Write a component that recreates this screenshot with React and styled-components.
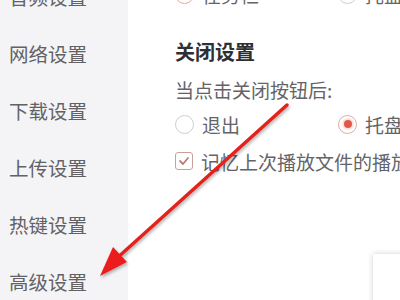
import styled, { createGlobalStyle } from 'styled-components'

const Global = createGlobalStyle`
  html, body {
    margin: 0;
    padding: 0;
    background: #fff;
  }
  body {
    font-family: "Noto Sans CJK SC", "Noto Sans", sans-serif;
  }
`;

const Page = styled.div`
  position: relative;
  width: 400px;
  height: 300px;
  overflow: hidden;
  display: flex;
`;

const Sidebar = styled.div`
  width: 128px;
  flex-shrink: 0;
  background: #f4f4f6;
  display: flex;
  flex-direction: column;
`;

const NavList = styled.div`
  margin-top: -32px;
  display: flex;
  flex-direction: column;
`;

const NavItem = styled.div`
  height: 57px;
  line-height: 57px;
  padding-left: 9px;
  font-size: 19.5px;
  color: #626266;
  white-space: nowrap;
`;

const Main = styled.div`
  flex: 1;
  padding-left: 47px;
  background: #fff;
`;

const Content = styled.div`
  margin-top: -18px;
  display: flex;
  flex-direction: column;
`;

const Row = styled.div`
  display: flex;
  align-items: center;
  height: 24px;
  margin-top: ${p => p.$gap || 0}px;
  white-space: nowrap;
`;

const Option = styled.div`
  display: flex;
  align-items: center;
  width: ${p => p.$width || 'auto'};
  flex-shrink: 0;
`;

const Radio = styled.span`
  box-sizing: border-box;
  width: 19px;
  height: 19px;
  border-radius: 50%;
  border: 1px solid ${p => (p.$on ? '#eaa99d' : '#cfcfcf')};
  display: flex;
  align-items: center;
  justify-content: center;
  flex-shrink: 0;
  &::after {
    content: '';
    display: ${p => (p.$on ? 'block' : 'none')};
    width: 8px;
    height: 8px;
    border-radius: 50%;
    background: #e0594b;
    box-shadow: 0 0 0 2px #fbe3de;
  }
`;

const Check = styled.span`
  box-sizing: border-box;
  width: 18px;
  height: 18px;
  border-radius: 3px;
  border: 1.5px solid #c9a198;
  display: flex;
  align-items: center;
  justify-content: center;
  flex-shrink: 0;
`;

const Label = styled.span`
  margin-left: 8px;
  font-size: 19px;
  color: #646468;
`;

const Heading = styled.div`
  margin-top: 33px;
  line-height: 26px;
  font-size: 20px;
  font-weight: 700;
  color: #2f2f31;
`;

const SubText = styled.div`
  margin-top: 13px;
  line-height: 24px;
  font-size: 19px;
  color: #646468;
  white-space: nowrap;
`;

const Popup = styled.div`
  position: absolute;
  left: 373px;
  top: 254px;
  width: 60px;
  height: 80px;
  background: #fff;
  box-shadow: 0 0 6px rgba(0, 0, 0, 0.18);
`;

const Overlay = styled.svg`
  position: absolute;
  left: 0;
  top: 0;
  pointer-events: none;
`;

function CheckMark() {
  return (
    <svg width="12" height="10" viewBox="0 0 12 10">
      <path d="M2 5 L5 8 L10 2" fill="none" stroke="#b87d73" strokeWidth="1.8" strokeLinecap="round" strokeLinejoin="round" />
    </svg>
  );
}

const navItems = ['音频设置', '网络设置', '下载设置', '上传设置', '热键设置', '高级设置'];

export default function App() {
  return (
    <>
      <Global />
      <Page>
        <Sidebar>
          <NavList>
            {navItems.map(n => (
              <NavItem key={n}>{n}</NavItem>
            ))}
          </NavList>
        </Sidebar>
        <Main>
          <Content>
            <Row>
              <Option $width="163px">
                <Radio $on />
                <Label>任务栏</Label>
              </Option>
              <Option>
                <Radio />
                <Label>托盘</Label>
              </Option>
            </Row>
            <Heading>关闭设置</Heading>
            <SubText>当点击关闭按钮后:</SubText>
            <Row $gap={10}>
              <Option $width="163px">
                <Radio />
                <Label>退出</Label>
              </Option>
              <Option>
                <Radio $on />
                <Label>托盘</Label>
              </Option>
            </Row>
            <Row $gap={13}>
              <Option>
                <Check>
                  <CheckMark />
                </Check>
                <Label>记忆上次播放文件的播放位置</Label>
              </Option>
            </Row>
          </Content>
        </Main>
        <Popup />
        <Overlay width="400" height="300" viewBox="0 0 400 300">
          <defs>
            <filter id="sh" x="-20%" y="-20%" width="140%" height="140%">
              <feDropShadow dx="1" dy="2" stdDeviation="1.5" floodColor="#000" floodOpacity="0.3" />
            </filter>
          </defs>
          <g filter="url(#sh)">
            <line x1="287" y1="105" x2="116" y2="259" stroke="#e3221c" strokeWidth="3.5" strokeLinecap="round" />
            <polygon points="100,276 113,247 127,262" fill="#ec1e1a" />
          </g>
        </Overlay>
      </Page>
    </>
  );
}
